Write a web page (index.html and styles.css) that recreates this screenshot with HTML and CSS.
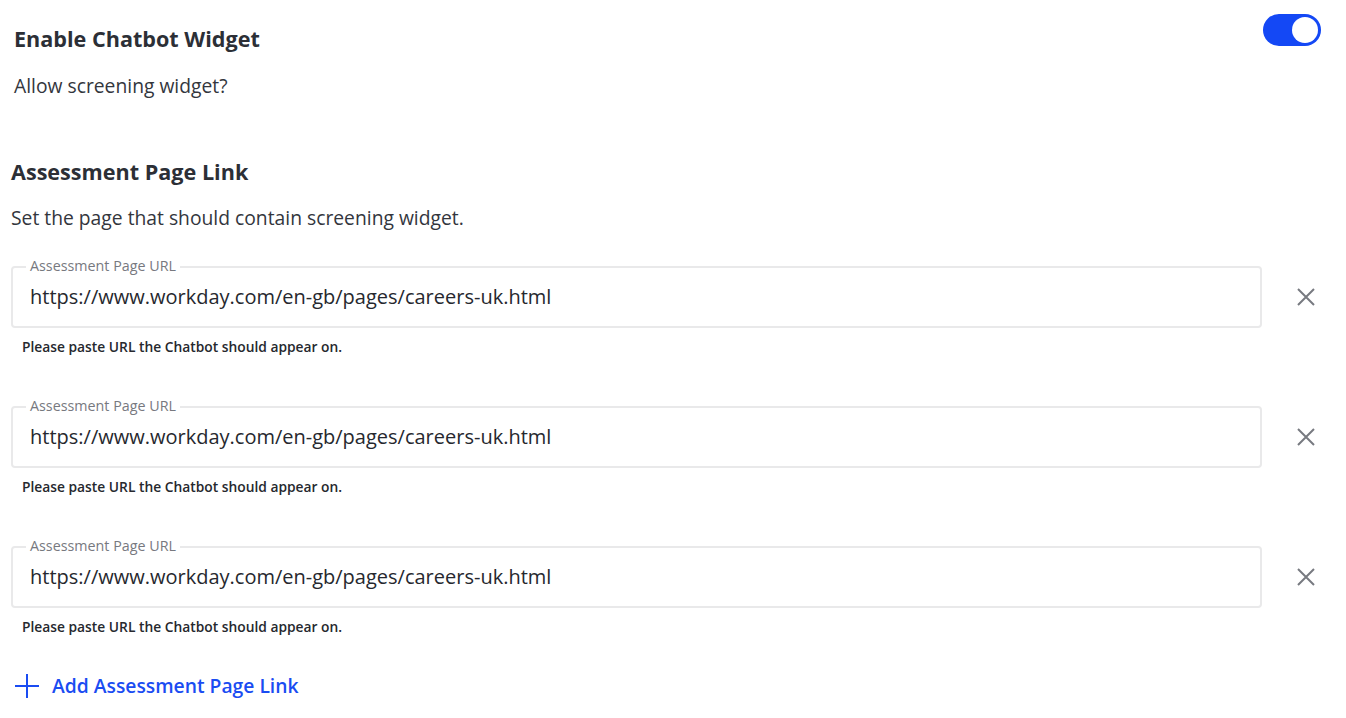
FILE: index.html
```html
<!DOCTYPE html>
<html lang="en">
<head>
<meta charset="utf-8">
<title>Chatbot Widget Settings</title>
<link rel="stylesheet" href="styles.css">
</head>
<body>
<main class="page">
  <section class="enable">
    <div class="enable-row">
      <h2 class="title">Enable Chatbot Widget</h2>
      <div class="toggle" role="switch" aria-checked="true"><span class="knob"></span></div>
    </div>
    <p class="desc">Allow screening widget?</p>
  </section>

  <section class="links">
    <h2 class="title">Assessment Page Link</h2>
    <p class="desc desc-links">Set the page that should contain screening widget.</p>

    <div class="field">
      <div class="field-row">
        <div class="box">
          <span class="box-label">Assessment Page URL</span>
          <span class="box-value">https://www.workday.com/en-gb/pages/careers-uk.html</span>
        </div>
        <button class="remove" aria-label="Remove">
          <svg width="20" height="20" viewBox="0 0 20 20"><path d="M2 2 L18 18 M18 2 L2 18" stroke="#777a80" stroke-width="2" stroke-linecap="butt" fill="none"/></svg>
        </button>
      </div>
      <p class="helper">Please paste URL the Chatbot should appear on.</p>
    </div>

    <div class="field">
      <div class="field-row">
        <div class="box">
          <span class="box-label">Assessment Page URL</span>
          <span class="box-value">https://www.workday.com/en-gb/pages/careers-uk.html</span>
        </div>
        <button class="remove" aria-label="Remove">
          <svg width="20" height="20" viewBox="0 0 20 20"><path d="M2 2 L18 18 M18 2 L2 18" stroke="#777a80" stroke-width="2" stroke-linecap="butt" fill="none"/></svg>
        </button>
      </div>
      <p class="helper">Please paste URL the Chatbot should appear on.</p>
    </div>

    <div class="field">
      <div class="field-row">
        <div class="box">
          <span class="box-label">Assessment Page URL</span>
          <span class="box-value">https://www.workday.com/en-gb/pages/careers-uk.html</span>
        </div>
        <button class="remove" aria-label="Remove">
          <svg width="20" height="20" viewBox="0 0 20 20"><path d="M2 2 L18 18 M18 2 L2 18" stroke="#777a80" stroke-width="2" stroke-linecap="butt" fill="none"/></svg>
        </button>
      </div>
      <p class="helper">Please paste URL the Chatbot should appear on.</p>
    </div>

    <a class="add" href="#">
      <svg width="26" height="26" viewBox="0 0 26 26"><path d="M13 1 V25 M1 13 H25" stroke="#1a4cf2" stroke-width="2" fill="none"/></svg>
      <span>Add Assessment Page Link</span>
    </a>
  </section>
</main>
</body>
</html>
```

FILE: styles.css
```css
* { box-sizing: border-box; }

html, body {
  margin: 0;
  padding: 0;
  background: #ffffff;
}

body {
  font-family: "Open Sans", "Noto Sans", sans-serif;
  color: #33363d;
}

.page {
  padding: 14px 25px 0 11px;
}

.enable {
  padding-left: 3px;
}

.enable-row {
  display: flex;
  justify-content: space-between;
  align-items: flex-start;
}

.title {
  margin: 11px 0 0;
  font-size: 21.6px;
  line-height: 28px;
  font-weight: 700;
  color: #2c2f36;
}

.desc {
  margin: 21px 0 0;
  font-size: 19.3px;
  line-height: 24px;
  color: #33363d;
}

.toggle {
  width: 58px;
  height: 32px;
  border-radius: 16px;
  background: #1448f5;
  display: flex;
  justify-content: flex-end;
  align-items: center;
  padding: 3px;
}

.knob {
  width: 26px;
  height: 26px;
  border-radius: 50%;
  background: #ffffff;
}

.links {
  margin-top: 60px;
}

.links .title {
  margin-top: 0;
}

.desc-links {
  margin-top: 20px;
}

.field {
  margin-top: 36px;
}

.field + .field {
  margin-top: 50px;
}

.field-row {
  display: flex;
  align-items: center;
}

.box {
  position: relative;
  width: 1251px;
  height: 62px;
  border: 2px solid #e9e9ea;
  border-radius: 4px;
  padding: 0 17px;
  display: flex;
  align-items: center;
}

.box-label {
  position: absolute;
  top: -11px;
  left: 13px;
  padding: 0 4px;
  background: #ffffff;
  font-size: 14.3px;
  line-height: 18px;
  color: #77797f;
}

.box-value {
  font-size: 20px;
  line-height: 24px;
  color: #26282e;
}

.remove {
  margin-left: 33px;
  width: 22px;
  height: 22px;
  padding: 1px;
  border: 0;
  background: transparent;
  display: flex;
  align-items: center;
  justify-content: center;
  cursor: pointer;
}

.helper {
  margin: 10px 0 0 11px;
  font-size: 13.8px;
  line-height: 18px;
  font-weight: 600;
  color: #26282e;
}

.add {
  margin-top: 37px;
  margin-left: 3px;
  display: inline-flex;
  align-items: center;
  gap: 12px;
  text-decoration: none;
  color: #1a4cf2;
  font-size: 19.3px;
  line-height: 24px;
  font-weight: 600;
}
```
